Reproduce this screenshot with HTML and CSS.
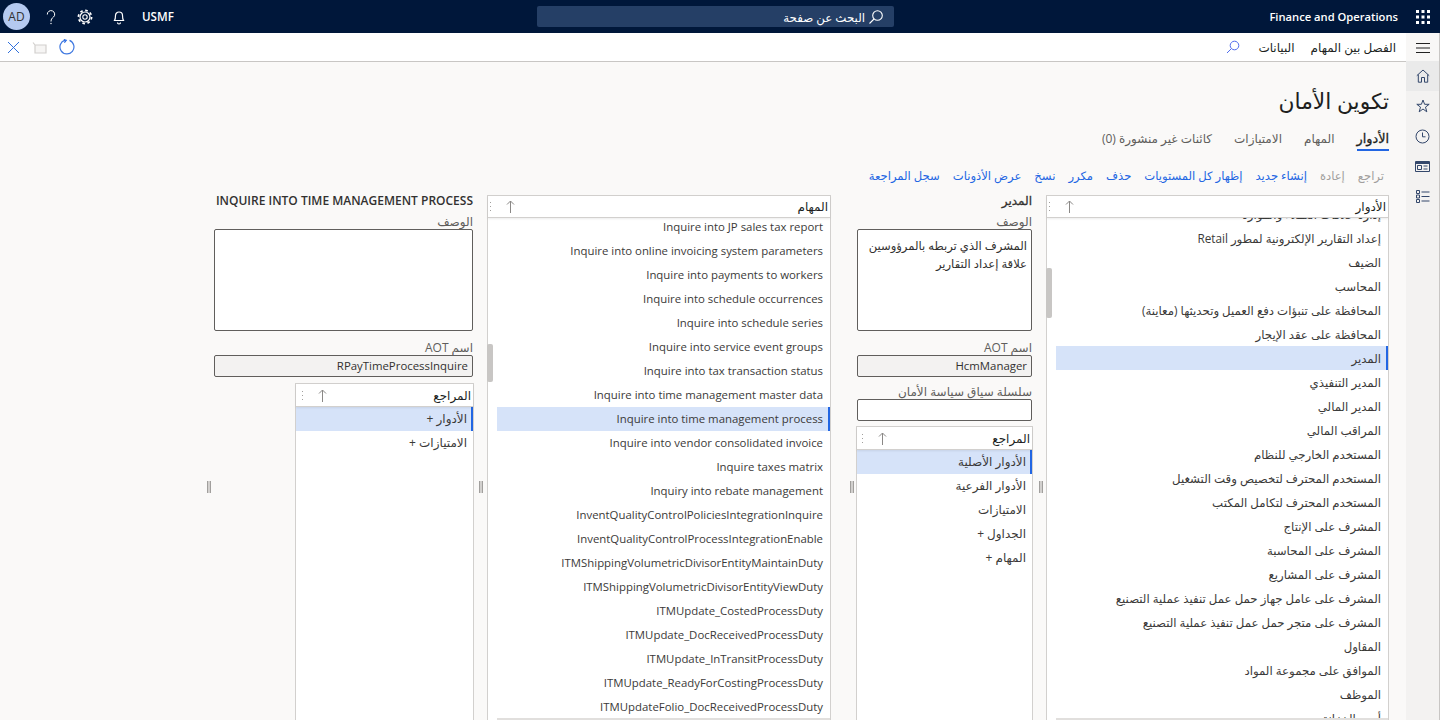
FILE: index.html
```html
<!DOCTYPE html>
<html lang="ar" dir="rtl">
<head>
    <meta charset="UTF-8">
    <title>تكوين الأمان</title>
    <link rel="stylesheet" href="styles.css">
</head>
<body>
    <header class="topbar">
        <div class="app-launcher">
            <svg width="16" height="16" viewBox="0 0 16 16" fill="#fff"><rect x="1" y="1" width="3" height="3"/><rect x="6.5" y="1" width="3" height="3"/><rect x="12" y="1" width="3" height="3"/><rect x="1" y="6.5" width="3" height="3"/><rect x="6.5" y="6.5" width="3" height="3"/><rect x="12" y="6.5" width="3" height="3"/><rect x="1" y="12" width="3" height="3"/><rect x="6.5" y="12" width="3" height="3"/><rect x="12" y="12" width="3" height="3"/></svg>
        </div>
        <div class="app-name">Finance and Operations</div>
        <div class="search-wrap">
            <div class="search-box">
                <svg width="16" height="16" viewBox="0 0 16 16" fill="none" stroke="#fff" stroke-width="1.1"><circle cx="9.5" cy="6.5" r="4.8"/><path d="M6 10 1.5 14.5"/></svg>
                <span>البحث عن صفحة</span>
            </div>
        </div>
        <div class="top-tools">
            <span class="company">USMF</span>
            <span class="tool"><svg width="14" height="16" viewBox="0 0 14 16" fill="none" stroke="#fff" stroke-width="1.2"><path d="M2.500 11.500c1-1.500 1-3 1-5a3.500 3.500 0 0 1 7 0c0 2 0 3.500 1 5z"/><path d="M5.500 13.500a1.500 1.500 0 0 0 3 0"/></svg></span>
            <span class="tool"><svg width="16" height="16" viewBox="0 0 16 16" fill="none" stroke="#fff"><circle cx="8" cy="8" r="2.200" stroke-width="1.100"/><circle cx="8" cy="8" r="5" stroke-width="1.200"/><circle cx="8" cy="8" r="6.600" stroke-width="1.700" stroke-dasharray="2.600 2.580"/></svg></span>
            <span class="tool"><svg width="10" height="16" viewBox="0 0 10 16" fill="none" stroke="#fff" stroke-width="1"><path d="M1.300 5.500a3.700 3.700 0 1 1 6 2.700c-1.300 1-2.300 2-2.300 4.300"/><circle cx="5" cy="14.500" r=".7" fill="#fff" stroke="none"/></svg></span>
            <span class="avatar">AD</span>
        </div>
    </header>

    <div class="shell">
        <nav class="rail">
            <div class="rail-btn">
                <svg width="16" height="12" viewBox="0 0 16 12" stroke="#222" stroke-width="1"><path d="M1 1.500h14M1 6h14M1 10.500h14"/></svg>
            </div>
            <div class="rail-btn rail-btn-on">
                <svg width="14" height="14" viewBox="0 0 14 14" fill="none" stroke="#33476b" stroke-width="1"><path d="M.8 6.700 7 1l6.200 5.700M2.300 5.500v7.700h3.200V8.500h3v4.700h3.200V5.500"/></svg>
            </div>
            <div class="rail-btn">
                <svg width="14" height="14" viewBox="0 0 14 14" fill="none" stroke="#33476b" stroke-width="1"><path d="M7 1 8.600 5.300H13.200L9.500 8.100 10.800 12.800 7 10 3.200 12.800 4.500 8.100.8 5.300H5.400z"/></svg>
            </div>
            <div class="rail-btn">
                <svg width="15" height="15" viewBox="0 0 15 15" fill="none" stroke="#33476b" stroke-width="1"><circle cx="7.500" cy="7.500" r="6.500"/><path d="M7.500 3.500v4.300h3"/></svg>
            </div>
            <div class="rail-btn">
                <svg width="15" height="13" viewBox="0 0 15 13" fill="none" stroke="#33476b" stroke-width="1"><path d="M.5 1.500h14v10H.5z"/><path d="M.5 3h14" stroke-width="2"/><path d="M2.500 5.500h4v4h-4zM8.500 6h4M8.500 9h4"/></svg>
            </div>
            <div class="rail-btn">
                <svg width="14" height="13" viewBox="0 0 14 13" fill="none" stroke="#33476b" stroke-width="1"><path d="M.5.500h3v3h-3zM.5 5h3v3h-3zM.5 9.500h3v3h-3zM5.500 2h8M5.500 6.500h8M5.500 11h8"/></svg>
            </div>
        </nav>

        <div class="page">
            <div class="actionbar">
                <span class="actionbar-link">الفصل بين المهام</span>
                <span class="actionbar-link">البيانات</span>
                <svg class="actionbar-search" width="14" height="14" viewBox="0 0 14 14" fill="none" stroke="#4f6bed" stroke-width="1"><circle cx="8.500" cy="5.500" r="4.300"/><path d="M5.300 8.700 1 13"/></svg>
                <div class="actionbar-tools">
                    <svg width="16" height="16" viewBox="0 0 16 16" fill="none" stroke="#3f78e0" stroke-width="1.200"><path d="M6 1.200a7 7 0 1 0 4.500.2"/><path d="M4.800 .6 7.200 1.400 5.400 3.600" stroke="#2266e3"/></svg>
                    <svg width="15" height="13" viewBox="0 0 15 13" fill="#f6f5f4" stroke="#d2d0ce" stroke-width="1.200"><path d="M1 1.500 3 4h11v8H3V4"/></svg>
                    <svg width="13" height="13" viewBox="0 0 13 13" stroke="#2f6fdc" stroke-width="1"><path d="M1 1l11 11M12 1 1 12"/></svg>
                </div>
            </div>

            <main class="content">
                <h1 class="page-title">تكوين الأمان</h1>
                <div class="tabs">
                    <span class="tab tab-on">الأدوار</span>
                    <span class="tab">المهام</span>
                    <span class="tab">الامتيازات</span>
                    <span class="tab">كائنات غير منشورة (0)</span>
                </div>
                <div class="commands">
                    <span class="cmd cmd-off">تراجع</span>
                    <span class="cmd cmd-off">إعادة</span>
                    <span class="cmd">إنشاء جديد</span>
                    <span class="cmd">إظهار كل المستويات</span>
                    <span class="cmd">حذف</span>
                    <span class="cmd">مكرر</span>
                    <span class="cmd">نسخ</span>
                    <span class="cmd">عرض الأذونات</span>
                    <span class="cmd">سجل المراجعة</span>
                </div>

                <div class="panes">
                    <section class="grid grid-roles">
                        <div class="grid-head">
                            <b>الأدوار</b>
                            <svg class="sort" width="9" height="13" viewBox="0 0 9 13" fill="none" stroke="#8a8886"><path d="M4.500 13V1M1 4.500 4.500 1 8 4.500"/></svg>
                            <svg class="dots" width="3" height="11" viewBox="0 0 3 11" fill="#a19f9d"><rect x="1" y="1" width="1" height="1"/><rect x="1" y="5" width="1" height="1"/><rect x="1" y="9" width="1" height="1"/></svg>
                        </div>
                        <div class="grid-body">
                            <div class="rows rows-roles">
                                <div class="row">إدارة علاقات العملاء والموارد</div>
                                <div class="row">إعداد التقارير الإلكترونية لمطور Retail</div>
                                <div class="row">الضيف</div>
                                <div class="row">المحاسب</div>
                                <div class="row">المحافظة على تنبؤات دفع العميل وتحديثها (معاينة)</div>
                                <div class="row">المحافظة على عقد الإيجار</div>
                                <div class="row row-on">المدير</div>
                                <div class="row">المدير التنفيذي</div>
                                <div class="row">المدير المالي</div>
                                <div class="row">المراقب المالي</div>
                                <div class="row">المستخدم الخارجي للنظام</div>
                                <div class="row">المستخدم المحترف لتخصيص وقت التشغيل</div>
                                <div class="row">المستخدم المحترف لتكامل المكتب</div>
                                <div class="row">المشرف على الإنتاج</div>
                                <div class="row">المشرف على المحاسبة</div>
                                <div class="row">المشرف على المشاريع</div>
                                <div class="row">المشرف على عامل جهاز حمل عمل تنفيذ عملية التصنيع</div>
                                <div class="row">المشرف على متجر حمل عمل تنفيذ عملية التصنيع</div>
                                <div class="row">المقاول</div>
                                <div class="row">الموافق على مجموعة المواد</div>
                                <div class="row">الموظف</div>
                                <div class="row">أمين الخزانة</div>
                            </div>
                        </div>
                        <span class="thumb thumb-roles"></span>
                    </section>

                    <div class="splitter splitter-a"><i></i></div>

                    <section class="details details-role">
                        <h2 class="details-title">المدير</h2>
                        <label class="field-label">الوصف</label>
                        <div class="memo">المشرف الذي تربطه بالمرؤوسين علاقة إعداد التقارير</div>
                        <label class="field-label field-gap">اسم AOT</label>
                        <div class="input input-ro">HcmManager</div>
                        <label class="field-label field-gap-b">سلسلة سياق سياسة الأمان</label>
                        <div class="input"></div>
                        <div class="grid grid-refs">
                            <div class="grid-head">
                                <b>المراجع</b>
                                <svg class="sort" width="9" height="13" viewBox="0 0 9 13" fill="none" stroke="#8a8886"><path d="M4.500 13V1M1 4.500 4.500 1 8 4.500"/></svg>
                                <svg class="dots" width="3" height="11" viewBox="0 0 3 11" fill="#a19f9d"><rect x="1" y="1" width="1" height="1"/><rect x="1" y="5" width="1" height="1"/><rect x="1" y="9" width="1" height="1"/></svg>
                            </div>
                            <div class="rows">
                                <div class="row row-on">الأدوار الأصلية</div>
                                <div class="row">الأدوار الفرعية</div>
                                <div class="row">الامتيازات</div>
                                <div class="row">الجداول +</div>
                                <div class="row">المهام +</div>
                            </div>
                        </div>
                    </section>

                    <div class="splitter splitter-b"><i></i></div>

                    <section class="grid grid-duties">
                        <div class="grid-head">
                            <b>المهام</b>
                            <svg class="sort" width="9" height="13" viewBox="0 0 9 13" fill="none" stroke="#8a8886"><path d="M4.500 13V1M1 4.500 4.500 1 8 4.500"/></svg>
                            <svg class="dots" width="3" height="11" viewBox="0 0 3 11" fill="#a19f9d"><rect x="1" y="1" width="1" height="1"/><rect x="1" y="5" width="1" height="1"/><rect x="1" y="9" width="1" height="1"/></svg>
                        </div>
                        <div class="grid-body">
                            <div class="rows rows-duties">
                                <div class="row"><bdi>Inquire into JP sales tax report</bdi></div>
                                <div class="row"><bdi>Inquire into online invoicing system parameters</bdi></div>
                                <div class="row"><bdi>Inquire into payments to workers</bdi></div>
                                <div class="row"><bdi>Inquire into schedule occurrences</bdi></div>
                                <div class="row"><bdi>Inquire into schedule series</bdi></div>
                                <div class="row"><bdi>Inquire into service event groups</bdi></div>
                                <div class="row"><bdi>Inquire into tax transaction status</bdi></div>
                                <div class="row"><bdi>Inquire into time management master data</bdi></div>
                                <div class="row row-on"><bdi>Inquire into time management process</bdi></div>
                                <div class="row"><bdi>Inquire into vendor consolidated invoice</bdi></div>
                                <div class="row"><bdi>Inquire taxes matrix</bdi></div>
                                <div class="row"><bdi>Inquiry into rebate management</bdi></div>
                                <div class="row"><bdi>InventQualityControlPoliciesIntegrationInquire</bdi></div>
                                <div class="row"><bdi>InventQualityControlProcessIntegrationEnable</bdi></div>
                                <div class="row"><bdi>ITMShippingVolumetricDivisorEntityMaintainDuty</bdi></div>
                                <div class="row"><bdi>ITMShippingVolumetricDivisorEntityViewDuty</bdi></div>
                                <div class="row"><bdi>ITMUpdate_CostedProcessDuty</bdi></div>
                                <div class="row"><bdi>ITMUpdate_DocReceivedProcessDuty</bdi></div>
                                <div class="row"><bdi>ITMUpdate_InTransitProcessDuty</bdi></div>
                                <div class="row"><bdi>ITMUpdate_ReadyForCostingProcessDuty</bdi></div>
                                <div class="row"><bdi>ITMUpdateFolio_DocReceivedProcessDuty</bdi></div>
                            </div>
                        </div>
                        <span class="thumb thumb-duties"></span>
                    </section>

                    <div class="splitter splitter-c"><i></i></div>

                    <section class="details details-duty">
                        <h2 class="details-title">INQUIRE INTO TIME MANAGEMENT PROCESS</h2>
                        <label class="field-label">الوصف</label>
                        <div class="memo"></div>
                        <label class="field-label field-gap">اسم AOT</label>
                        <div class="input input-ro">RPayTimeProcessInquire</div>
                        <div class="grid grid-refs grid-refs-short">
                            <div class="grid-head">
                                <b>المراجع</b>
                                <svg class="sort" width="9" height="13" viewBox="0 0 9 13" fill="none" stroke="#8a8886"><path d="M4.500 13V1M1 4.500 4.500 1 8 4.500"/></svg>
                                <svg class="dots" width="3" height="11" viewBox="0 0 3 11" fill="#a19f9d"><rect x="1" y="1" width="1" height="1"/><rect x="1" y="5" width="1" height="1"/><rect x="1" y="9" width="1" height="1"/></svg>
                            </div>
                            <div class="rows">
                                <div class="row row-on">الأدوار +</div>
                                <div class="row">الامتيازات +</div>
                            </div>
                        </div>
                    </section>

                    <div class="splitter splitter-end"><i></i></div>
                </div>
            </main>
        </div>
    </div>
</body>
</html>
```

FILE: styles.css
```css
* {
    box-sizing: border-box;
}

html, body {
    margin: 0;
    height: 720px;
    overflow: hidden;
}

body {
    font-family: "Open Sans", "DejaVu Sans", sans-serif;
    font-size: 12px;
    color: #323130;
    background-color: #faf9f8;
}

/* Barra superior */
.topbar {
    height: 33px;
    display: flex;
    align-items: center;
    background-color: #00173a;
    color: #fff;
}

.app-launcher {
    width: 34px;
    margin-left: 8px;
    display: flex;
    justify-content: center;
}

.app-name {
    width: 260px;
    font-weight: 600;
    font-size: 11.2px;
}

.search-wrap {
    flex: 1;
    display: flex;
    padding-right: 244px;
}

.search-box {
    width: 357px;
    height: 21px;
    padding-right: 10px;
    display: flex;
    align-items: center;
    gap: 3px;
    background-color: #253f66;
    border-radius: 2px;
    font-size: 11.8px;
}

.top-tools {
    display: flex;
    align-items: center;
    direction: ltr;
    flex-direction: row-reverse;
    padding-left: 3px;
}

.company {
    font-size: 11.6px;
    font-weight: 600;
    margin-left: 6px;
}

.tool {
    width: 34px;
    display: flex;
    justify-content: center;
}

.avatar {
    width: 27px;
    height: 27px;
    margin-right: 4px;
    border-radius: 50%;
    background-color: #b4c9f0;
    color: #323130;
    display: flex;
    align-items: center;
    justify-content: center;
    font-size: 12px;
}

.shell {
    display: flex;
    height: 687px;
}

/* Riel de navegacion */
.rail {
    width: 34px;
    background-color: #f3f2f1;
    border-right: 1px solid #c8c6c4;
    flex: none;
}

.rail-btn {
    height: 30px;
    display: flex;
    align-items: center;
    justify-content: center;
}

.rail-btn:first-child {
    height: 28px;
    padding-top: 2px;
    background-color: #f8f7f6;
}

.rail-btn-on {
    background-color: #eaeaea;
}

.page {
    flex: 1;
    min-width: 0;
}

.actionbar {
    height: 29px;
    background-color: #fff;
    border-bottom: 1px solid #c8c6c4;
    display: flex;
    align-items: center;
    padding: 0 10px 0 7px;
    gap: 16px;
    font-size: 12px;
}

.actionbar-link {
    color: #201f1e;
}

.actionbar-search {
    margin-right: 2px;
}

.actionbar-tools {
    margin-right: auto;
    display: flex;
    align-items: center;
    gap: 12px;
}

.content {
    padding: 25px 17px 0 0;
}

.page-title {
    margin: 0;
    font-size: 21.8px;
    font-weight: 400;
    line-height: 28px;
    color: #201f1e;
}

.tabs {
    display: flex;
    gap: 22px;
    margin-top: 15px;
    height: 21px;
}

.tab {
    color: #605e5c;
    font-size: 12px;
    line-height: 17px;
}

.tab-on {
    color: #201f1e;
    font-size: 12.8px;
    -webkit-text-stroke: .3px #201f1e;
    border-bottom: 2px solid #2266e3;
}

.commands {
    display: flex;
    gap: 13px;
    margin-top: 17px;
    padding-right: 5px;
    height: 27px;
    color: #2266e3;
    font-size: 11.6px;
}

.cmd-off {
    color: #a19f9d;
}

.panes {
    display: flex;
    height: 525px;
    position: relative;
}

.splitter {
    flex: none;
    display: flex;
    align-items: center;
    justify-content: flex-end;
}

.splitter i {
    width: 4px;
    height: 12px;
    margin-top: 59px;
    border: solid #a19f9d;
    border-width: 0 1px;
    background-color: #d2d0ce;
}

.splitter-a {
    width: 14px;
    padding-left: 7px;
}

.splitter-b {
    width: 25px;
    padding-left: 19px;
}

.splitter-c {
    width: 14px;
    padding-left: 6px;
}

.splitter-end {
    width: 7px;
}

/* Rejillas */
.grid {
    position: relative;
    background-color: #fff;
    border: 1px solid #d2d0ce;
    border-bottom: 0;
    display: flex;
    flex-direction: column;
}

.grid-roles {
    width: 343px;
}

.grid-duties {
    width: 344px;
}

.grid-head {
    height: 22px;
    flex: none;
    display: flex;
    align-items: center;
    padding-right: 2px;
    border-bottom: 1px solid #d2d0ce;
    box-shadow: 0 1px 2px rgba(0, 0, 0, .08);
    position: relative;
    z-index: 1;
    background-color: #fff;
}

.grid-head b {
    font-weight: 400;
    color: #201f1e;
    font-size: 12px;
}

.sort {
    margin-right: auto;
    margin-left: 14px;
}

.dots {
    margin-left: 1px;
}

.grid-body {
    flex: 1;
    overflow: hidden;
    border-bottom: 2px solid #e1dfdd;
    margin-left: 9px;
}

.rows-roles {
    margin-top: -16px;
    font-size: 11.75px;
}

.rows-duties {
    margin-top: -3px;
    font-size: 11.4px;
}

.row {
    height: 24px;
    line-height: 24px;
    padding: 0 7px;
    color: #3b3a39;
    white-space: nowrap;
}

.row-on {
    background-color: #d6e3f9;
    border-right: 2px solid #2266e3;
    padding-right: 5px;
}

.thumb {
    position: absolute;
    width: 6px;
    left: -1px;
    background-color: #c8c6c4;
    border-radius: 2px;
}

.thumb-roles {
    top: 72px;
    height: 50px;
}

.thumb-duties {
    top: 148px;
    height: 38px;
}

/* Paneles de detalle */
.details {
    flex: none;
    display: flex;
    flex-direction: column;
    min-height: 0;
}

.details-role {
    width: 176px;
}

.details-duty {
    width: 259px;
}

.details-title {
    margin: -1px 0 1px;
    font-size: 12px;
    font-weight: 400;
    -webkit-text-stroke: .3px #323130;
    line-height: 14px;
    color: #323130;
    white-space: nowrap;
}

.details-duty .details-title {
    direction: ltr;
    text-align: right;
    font-weight: 600;
    -webkit-text-stroke: 0;
}

.field-label {
    display: block;
    margin-top: 5px;
    line-height: 15px;
    color: #605e5c;
}

.field-gap {
    margin-top: 9px;
}

.field-gap-b {
    margin-top: 7px;
}

.memo {
    height: 102px;
    border: 1px solid #605e5c;
    border-radius: 2px;
    background-color: #fff;
    padding: 7px 4px;
    font-size: 11.6px;
    line-height: 18px;
}

.input {
    height: 22px;
    border: 1px solid #605e5c;
    border-radius: 2px;
    background-color: #fff;
    padding: 0 4px;
    font-size: 11.4px;
    line-height: 20px;
}

.input-ro {
    background-color: #f3f2f1;
}

.details-role .memo, .details-role .input {
    margin-left: 1px;
}

.grid-refs {
    margin-top: 5px;
    margin-right: -1px;
    flex: 1;
}

.grid-refs .grid-head {
    height: 23px;
}

.grid-refs .row {
    padding-right: 6px;
}

.grid-refs .row-on {
    padding-right: 4px;
}

.grid-refs .dots {
    margin-left: 4px;
}

.grid-refs-short {
    margin-top: 6px;
    margin-left: 81px;
}

.grid-refs-short .dots {
    margin-left: 5px;
}
```
